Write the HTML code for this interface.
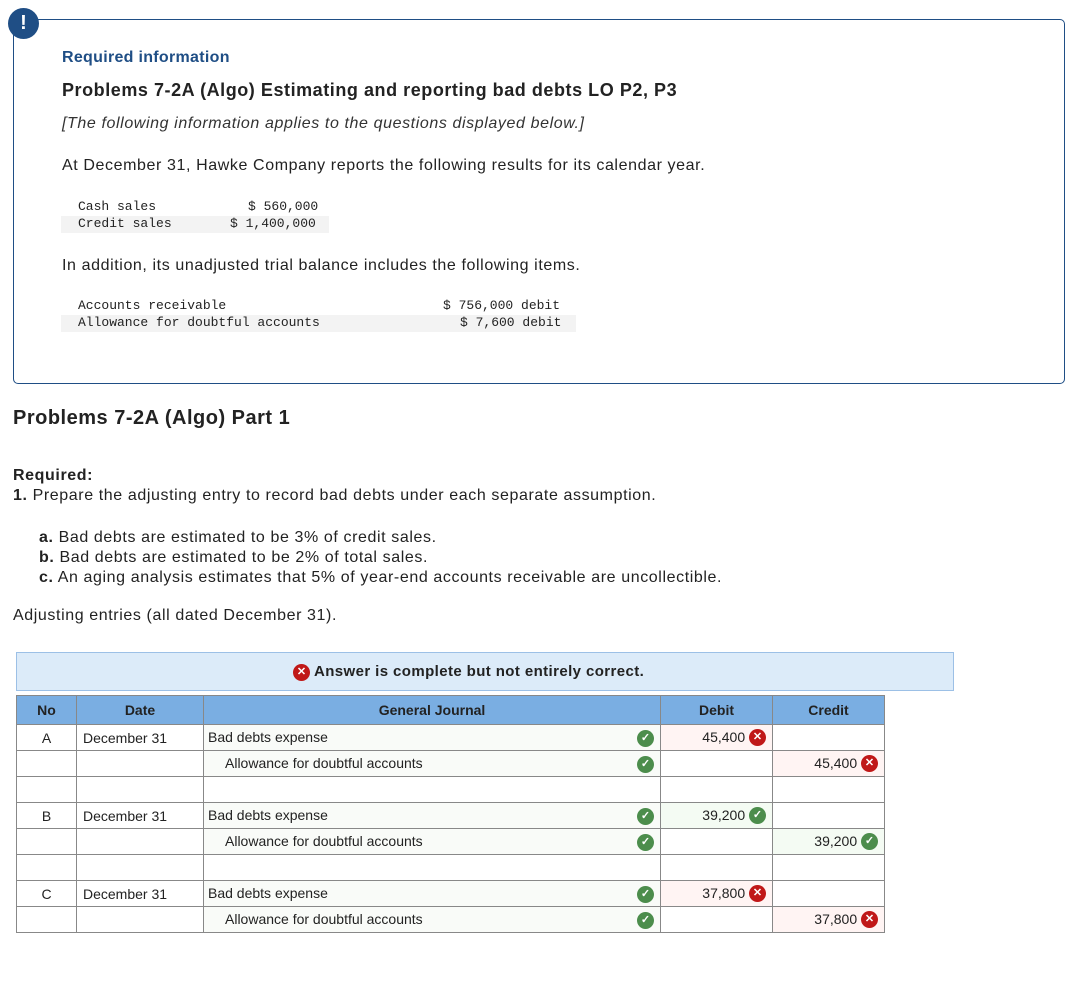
<!DOCTYPE html>
<html><head><style>
body{margin:0;background:#fff;font-family:"Liberation Sans",sans-serif;color:#222;width:1080px;height:997px;position:relative;overflow:hidden}
.a{position:absolute;white-space:nowrap}
.box{position:absolute;left:13px;top:19px;width:1050px;height:363px;border:1px solid #1f4e85;border-radius:5px}
.badge{position:absolute;left:8px;top:8px;width:31px;height:31px;border-radius:50%;background:#1f4e85;color:#fff;font-weight:bold;font-size:20px;text-align:center;line-height:31px}
.mono{font-family:"Liberation Mono",monospace;font-size:13px;color:#222}
.f16{font-size:16px;letter-spacing:0.6px}
table{position:absolute;left:16px;top:695px;border-collapse:collapse;font-size:14px}
td,th{border:1px solid #888;height:26px;padding:0 6px;box-sizing:border-box}
th{background:#7aaee2;font-weight:bold;height:29px}
.ck,.x{display:inline-block;width:17px;height:17px;border-radius:50%;color:#fff;font-size:11px;font-weight:bold;text-align:center;line-height:17px;vertical-align:middle;letter-spacing:0}
.ck{background:#4c8d4c}.x{background:#c01818}
.r{text-align:right}
.bad{background:#fff4f3}.ok{background:#f4fbf3}.acc{background:#f9fbf8}
</style></head><body>
<div class="box"></div>
<div class="badge">!</div>
<div class="a" style="left:62px;top:49px;font-size:16px;font-weight:bold;color:#1f4e85;letter-spacing:0.3px">Required information</div>
<div class="a" style="left:62px;top:80px;font-size:18px;font-weight:bold;letter-spacing:0.55px">Problems 7-2A (Algo) Estimating and reporting bad debts LO P2, P3</div>
<div class="a f16" style="left:62px;top:115px;font-style:italic;color:#333">[The following information applies to the questions displayed below.]</div>
<div class="a f16" style="left:62px;top:157px">At December 31, Hawke Company reports the following results for its calendar year.</div>
<div class="a" style="left:61px;top:216px;width:268px;height:17px;background:#f3f3f3"></div>
<div class="a mono" style="left:78px;top:199px">Cash sales</div>
<div class="a mono" style="left:78px;top:216px">Credit sales</div>
<div class="a mono" style="left:248px;top:199px">$ 560,000</div>
<div class="a mono" style="left:230px;top:216px">$ 1,400,000</div>
<div class="a f16" style="left:62px;top:257px">In addition, its unadjusted trial balance includes the following items.</div>
<div class="a" style="left:61px;top:315px;width:515px;height:17px;background:#f3f3f3"></div>
<div class="a mono" style="left:78px;top:298px">Accounts receivable</div>
<div class="a mono" style="left:78px;top:315px">Allowance for doubtful accounts</div>
<div class="a mono" style="left:443px;top:298px">$ 756,000 debit</div>
<div class="a mono" style="left:460px;top:315px">$ 7,600 debit</div>
<div class="a" style="left:13px;top:407px;font-size:20px;font-weight:bold;letter-spacing:0.5px">Problems 7-2A (Algo) Part 1</div>
<div class="a f16" style="left:13px;top:467px;font-weight:bold">Required:</div>
<div class="a f16" style="left:13px;top:487px"><b>1.</b> Prepare the adjusting entry to record bad debts under each separate assumption.</div>
<div class="a f16" style="left:39px;top:529px"><b>a.</b> Bad debts are estimated to be 3% of credit sales.</div>
<div class="a f16" style="left:39px;top:549px"><b>b.</b> Bad debts are estimated to be 2% of total sales.</div>
<div class="a f16" style="left:39px;top:569px"><b>c.</b> An aging analysis estimates that 5% of year-end accounts receivable are uncollectible.</div>
<div class="a f16" style="left:13px;top:607px">Adjusting entries (all dated December 31).</div>
<div class="a" style="left:16px;top:652px;width:938px;height:39px;background:#dcebf9;border:1px solid #9cc0e6;box-sizing:border-box"></div>
<div class="a" style="left:293px;top:663px;font-size:15px;font-weight:bold;letter-spacing:0.4px"><span class="x">✕</span> Answer is complete but not entirely correct.</div>
<table>
<tr><th style="width:60px">No</th><th style="width:127px">Date</th><th style="width:457px">General Journal</th><th style="width:112px">Debit</th><th style="width:112px">Credit</th></tr>
<tr><td style="text-align:center">A</td><td>December 31</td><td class="acc" style="padding-left:4px">Bad debts expense<span class="ck" style="float:right;margin-top:1px">✓</span></td><td class="r bad">45,400 <span class="x">✕</span></td><td></td></tr>
<tr><td></td><td></td><td class="acc" style="padding-left:21px">Allowance for doubtful accounts<span class="ck" style="float:right;margin-top:1px">✓</span></td><td></td><td class="r bad">45,400 <span class="x">✕</span></td></tr>
<tr><td></td><td></td><td></td><td></td><td></td></tr>
<tr><td style="text-align:center">B</td><td>December 31</td><td class="acc" style="padding-left:4px">Bad debts expense<span class="ck" style="float:right;margin-top:1px">✓</span></td><td class="r ok">39,200 <span class="ck">✓</span></td><td></td></tr>
<tr><td></td><td></td><td class="acc" style="padding-left:21px">Allowance for doubtful accounts<span class="ck" style="float:right;margin-top:1px">✓</span></td><td></td><td class="r ok">39,200 <span class="ck">✓</span></td></tr>
<tr><td></td><td></td><td></td><td></td><td></td></tr>
<tr><td style="text-align:center">C</td><td>December 31</td><td class="acc" style="padding-left:4px">Bad debts expense<span class="ck" style="float:right;margin-top:1px">✓</span></td><td class="r bad">37,800 <span class="x">✕</span></td><td></td></tr>
<tr><td></td><td></td><td class="acc" style="padding-left:21px">Allowance for doubtful accounts<span class="ck" style="float:right;margin-top:1px">✓</span></td><td></td><td class="r bad">37,800 <span class="x">✕</span></td></tr>
</table>
</body></html>
